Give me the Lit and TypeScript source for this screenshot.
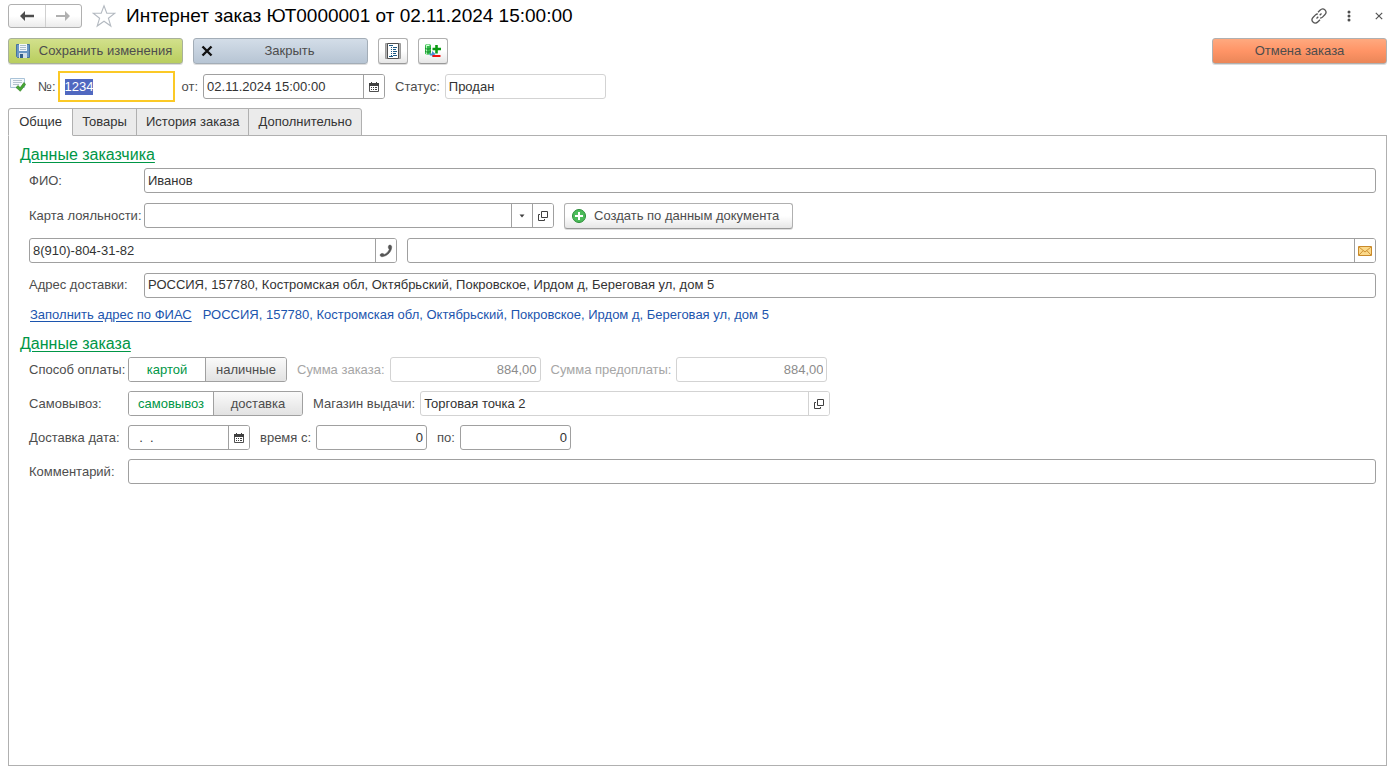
import { LitElement, html, css, svg, nothing, TemplateResult } from "lit";
import { customElement, state, query } from "lit/decorators.js";

const icon = (w: number, h: number, body: TemplateResult) =>
  html`<svg class="icon" width=${w} height=${h} viewBox="0 0 ${w} ${h}" aria-hidden="true">${body}</svg>`;

const icons = {
  back: icon(16, 12, svg`<path d="M1 6 6 1V4.700H15V7.300H6V11Z" fill="#4d4d4d"/>`),
  forward: icon(16, 12, svg`<path d="M15 6 10 1V5H1V7H10V11Z" fill="#b0b0b0"/>`),
  star: icon(24, 24, svg`<path d="M12 1.800 14.800 9.300H22.800L16.400 14.200 18.800 22 12 17.200 5.200 22 7.600 14.200 1.200 9.300H9.200Z" fill="#fff" stroke="#b4bac1" stroke-width="1.100"/>`),
  link: icon(16, 16, svg`<g fill="none" stroke="#555" stroke-width="1.300"><path d="M7 4.200 9 2.200C10.600 .6 12.600 .6 14 1.900 15.300 3.300 15.300 5.300 13.800 6.800L11.500 9.100C10.800 9.800 10 10.100 9.200 10"/><path d="M9 11.800 7 13.800C5.400 15.400 3.400 15.400 2 14.100 .7 12.700 .7 10.700 2.200 9.200L4.500 6.900C5.200 6.200 6 5.900 6.800 6"/><path d="M5.500 10.500 7.300 8.700M8.700 7.300 10.500 5.500"/></g>`),
  more: icon(4, 12, svg`<g fill="#4d4d4d"><circle cx="2" cy="2" r="1.500"/><circle cx="2" cy="6" r="1.500"/><circle cx="2" cy="10" r="1.500"/></g>`),
  close: icon(8, 8, svg`<path d="M.8 .8 7.200 7.200M7.200 .8 .8 7.200" stroke="#555" stroke-width="1.200"/>`),
  save: icon(14, 14, svg`<path d="M.5 .5H13.500V13.500H1.500L.5 12.500Z" fill="#6a97c4" stroke="#47749f"/><path d="M3 0H11V7H3Z" fill="#f3f7fa"/><path d="M4 1.500H10M4 3.500H10M4 5.500H10" stroke="#a9bccb"/><path d="M3 9H11V14H3Z" fill="#d3dfe8"/><path d="M4 10H7V14H4Z" fill="#33608c"/>`),
  cross: icon(12, 12, svg`<path d="M1.500 1.500 10.500 10.500M10.500 1.500 1.500 10.500" stroke="#111" stroke-width="2.400"/>`),
  list: icon(16, 16, svg`<path d="M.5 .5H15.500V15.500H.5Z" fill="#b4b4b4" stroke="#9a9a9a"/><path d="M2.500 .5H13.500V15.500H2.500Z" fill="#fff" stroke="#505050"/><g stroke="#1e5b86"><path d="M4 2.500H8M4 13.500H8"/><path d="M6 4.500H7M8 4.500H12M6 6.500H7M8 6.500H11M6 8.500H7M8 8.500H12M6 10.500H7M8 10.500H11M6 12.500H7M8 12.500H12"/></g>`),
  stock: icon(16, 16, svg`<path d="M0 2.500C0 .5 6 .5 6 2.500V10.500C6 12 0 12 0 10.500Z" fill="#35bd4c"/><path d="M1.500 2V11" stroke="#b6f5bd"/><path d="M3 1.500V3" stroke="#dcffe0" stroke-width="3"/><path d="M0 5C2 6.500 4 6.500 6 5M0 8C2 9.500 4 9.500 6 8" fill="none" stroke="#14872a"/><path d="M4 10.500H7V8L10.500 11 7 14V12.500H5Z" fill="#4a90d0"/><path d="M11.500 2V10.500M7.500 6H16" stroke="#0a9a12" stroke-width="2.600"/><path d="M7.500 13H15.500" stroke="#f01010" stroke-width="2"/>`),
  posted: icon(16, 14, svg`<path d="M.5 .5H14.500V9.500H.5Z" fill="#f5f9fc" stroke="#a9c3d8"/><path d="M3 2.500H12M3 4.500H12M3 6.500H9" stroke="#b5c3cf"/><path d="M6 9.500 8.200 7.500 10 9.800 14 4.500 15.600 6.500 10.300 13.300Z" fill="#46a832" stroke="#2a7a1d" stroke-width=".6"/>`),
  calendar: icon(10, 10, svg`<path d="M.5 2.500H9.500V9.500H.5Z" fill="#fff" stroke="#505050"/><path d="M0 1H10V4H0Z" fill="#404040"/><path d="M2.500 0V2M7.500 0V2" stroke="#404040"/><path d="M2 5.500H3M4 5.500H5M6 5.500H8M2 7.500H3M4 7.500H5M6 7.500H8" stroke="#404040"/>`),
  down: icon(6, 4, svg`<path d="M.5 .5H5.500L3 3.500Z" fill="#404040"/>`),
  open: icon(10, 10, svg`<path d="M3.500 .5H9.500V6.500H3.500Z" fill="none" stroke="#404040"/><path d="M2 3.500H.5V9.500H6.500V8" fill="none" stroke="#404040"/>`),
  phone: icon(14, 14, svg`<path d="M10 1.300C11.500 .6 12.800 1.600 12.700 3.200 12.400 8 8.400 12 3.200 12.700 1.600 12.800 .8 11.600 1.300 10.300 1.900 9.400 3.800 9.100 4.600 9.900L5.200 10.400C7.500 9.600 9.500 7.600 10.300 5.200L9.800 4.700C9 3.900 9.200 1.900 10 1.300Z" fill="#555" stroke="#555" stroke-width=".5"/>`),
  mail: icon(14, 10, svg`<path d="M.5 .5H13.500V9.500H.5Z" fill="#fbd98a" stroke="#c98a2b"/><path d="M1 1 7 6 13 1M1 9 5.200 4.600M13 9 8.800 4.600" fill="none" stroke="#c98a2b" stroke-width=".9"/>`),
  plus: icon(14, 14, svg`<circle cx="7" cy="7" r="6.500" fill="#4cbc5a" stroke="#2b8d38"/><path d="M7 3V11M3 7H11" stroke="#fff" stroke-width="2"/>`),
};

interface FieldOptions {
  id: string;
  value?: string;
  label?: string;
  size?: string;
  numeric?: boolean;
  readonly?: boolean;
  disabled?: boolean;
  actions?: { title: string; icon: TemplateResult }[];
}

@customElement("app-root")
export class AppRoot extends LitElement {
  @state() private tab = "Общие";
  @state() private payment = "картой";
  @state() private delivery = "самовывоз";
  @query("#number") private numberInput!: HTMLInputElement;

  static styles = css`
    :host { display: block; font: 13px/16px "Liberation Sans", Arial, sans-serif; color: #4d4d4d; background: #fff; }
    * { box-sizing: border-box; }
    button, input { font: inherit; color: inherit; margin: 0; }
    button { padding: 0; cursor: pointer; }
    .icon { display: block; flex: none; }
    .page { display: flex; flex-direction: column; min-height: 100vh; padding: 4px 12px 6px 8px; }
    .row { display: flex; align-items: center; }
    .spacer { flex: 1; }

    .titlebar { display: flex; align-items: center; height: 24px; }
    .nav { display: flex; width: 74px; height: 24px; border: 1px solid #b0b0b0; border-radius: 3px; background: linear-gradient(#fff 50%, #ebebeb); }
    .nav button { flex: 1; display: grid; place-items: center; border: 0; background: none; }
    .nav button + button { border-left: 1px solid #d0d0d0; }
    .plain { display: grid; place-items: center; border: 0; background: none; }
    .favorite { margin: 0 10px; }
    h1 { margin: 0; font-size: 19px; line-height: 24px; font-weight: 400; color: #000; white-space: nowrap; }
    .tools { display: flex; gap: 10px; margin-right: -2px; }
    .tools .plain { width: 20px; height: 20px; }

    .toolbar { display: flex; gap: 10px; margin-top: 10px; }
    .button { display: flex; align-items: center; height: 26px; border: 1px solid #b0b0b0; border-bottom-color: #999; border-radius: 3px; padding: 0 7px; background: linear-gradient(#fff 50%, #e6e6e6); box-shadow: 0 1px 0 #ddd; white-space: nowrap; }
    .button .caption { flex: 1; text-align: center; }
    .button .icon + .caption { padding-left: 6px; }
    .wide { width: 175px; }
    .square { width: 30px; justify-content: center; padding: 0; }
    .save { background: linear-gradient(#d2e08c, #b9ce5e); border-color: #a8b19a; }
    .shut { background: linear-gradient(#d3dde8, #b7c5d4); border-color: #a3adb7; }
    .cancel { background: linear-gradient(#ffa97f, #ff9466 50%, #ea8658); border-color: #b0b0b0; }

    .document { display: flex; align-items: center; height: 31px; margin-top: 7px; padding-left: 2px; }
    .document label { padding: 0 5px 0 10px; }
    .document .icon-slot { padding: 0 2px 4px 0; }
    .document .first { padding-right: 2px; }
    .document .near { padding-left: 7px; }

    .field { display: flex; height: 25px; min-width: 0; border: 1px solid #a0a0a0; border-radius: 3px; background: #fff; overflow: hidden; color: #333; }
    .field input { flex: 1; min-width: 0; width: 100%; border: 0; outline: 0; padding: 0 3px; background: none; }
    .field button { flex: none; width: 21px; display: grid; place-items: center; border: 0; border-left: 1px solid #a0a0a0; background: #fff; }
    .field.light, .field.light button { border-color: #d3d3d3; }
    .field.disabled { color: #8c8c8c; }
    .field.numeric input { text-align: right; }
    .field.active { height: 31px; border: 2px solid #fbc926; border-radius: 0; }
    .field.active input { padding: 0 5px; }
    input::selection { background: #5068c0; color: #fff; }
    .grow { flex: 1; }
    .w-number { width: 117px; }
    .w-date { width: 182px; }
    .w-status { width: 161px; }
    .w-lookup { width: 410px; }
    .w-phone { width: 368px; }
    .w-sum { width: 151px; }
    .w-day { width: 122px; }
    .w-time { width: 111px; }

    .tabs { display: flex; margin-top: 6px; }
    .tab { height: 28px; min-width: 65px; padding: 0 9px; margin-bottom: -1px; border: 1px solid #b0b0b0; background: #ebebeb; color: #333; }
    .tab + .tab { margin-left: -1px; }
    .tab:first-child { border-radius: 3px 0 0 0; }
    .tab:last-child { border-radius: 0 3px 0 0; }
    .tab.current { background: #fff; border-bottom-color: #fff; z-index: 1; }
    .panel { flex: 1; border: 1px solid #b0b0b0; padding: 9px 10px 10px 11px; }
    h2 { margin: 0; font-size: 16px; line-height: 20px; font-weight: 400; color: #009646; text-decoration: underline; text-underline-offset: 2px; }

    .form { display: flex; flex-direction: column; gap: 9px; padding: 3px 0 0 9px; }
    .customer { gap: 10px; }
    .form .row { height: 25px; white-space: nowrap; }
    .lead { flex: none; width: 99px; }
    .customer .lead { width: 115px; }
    .next { padding: 0 5px 0 10px; }
    .muted { color: #a6a6a6; }
    .create { margin-left: 10px; }
    .button.create .caption { padding: 0 6px 0 8px; }
    .contacts { gap: 10px; }
    .form .address { height: 24px; }
    .form .hint { height: 16px; gap: 11px; padding-left: 1px; color: #1c55ae; }
    .hint a { color: inherit; text-underline-offset: 2px; }
    .order-title { margin-top: 11px; }

    .switch { display: grid; height: 25px; border: 1px solid #a0a0a0; border-radius: 3px; overflow: hidden; }
    .switch label { display: grid; place-items: center; background: linear-gradient(#fafafa, #e2e2e2); cursor: pointer; }
    .switch label + label { border-left: 1px solid #a0a0a0; }
    .switch label.on { background: #fff; color: #009646; }
    .switch input { appearance: none; width: 0; height: 0; grid-area: 1 / 1; }
    .switch span { grid-area: 1 / 1; }
    .pay { width: 159px; grid-template-columns: 76px 1fr; }
    .ship { width: 175px; grid-template-columns: 84px 1fr; }
  `;

  firstUpdated() {
    this.numberInput.focus();
    this.numberInput.select();
  }

  private field(o: FieldOptions) {
    const names = ["field", o.size ?? "grow"];
    if (o.readonly || o.disabled) names.push("light");
    if (o.disabled) names.push("disabled");
    if (o.numeric) names.push("numeric");
    return html`<div class=${names.join(" ")}>
      <input id=${o.id} type="text" autocomplete="off" .value=${o.value ?? ""} aria-label=${o.label ?? nothing}
        ?readonly=${o.readonly} ?disabled=${o.disabled} />
      ${(o.actions ?? []).map((a) => html`<button type="button" title=${a.title}>${a.icon}</button>`)}
    </div>`;
  }

  private toggle(name: string, cls: string, options: string[], value: string, pick: (v: string) => void) {
    return html`<div class="switch ${cls}" role="radiogroup" aria-labelledby="${name}-label">
      ${options.map((v) => html`<label class=${v === value ? "on" : ""}>
        <input type="radio" name=${name} value=${v} .checked=${v === value} @change=${() => pick(v)} /><span>${v}</span>
      </label>`)}
    </div>`;
  }

  private renderGeneral() {
    const address = "РОССИЯ, 157780, Костромская обл, Октябрьский, Покровское, Ирдом д, Береговая ул, дом 5";
    const calendar = { title: "Выбрать дату", icon: icons.calendar };
    const open = { title: "Открыть", icon: icons.open };
    return html`
      <h2>Данные заказчика</h2>
      <div class="form customer">
        <div class="row"><label class="lead" for="name">ФИО:</label>${this.field({ id: "name", value: "Иванов" })}</div>
        <div class="row">
          <label class="lead" for="card">Карта лояльности:</label>
          ${this.field({ id: "card", size: "w-lookup", actions: [{ title: "Выбрать", icon: icons.down }, open] })}
          <button class="button create" type="button">${icons.plus}<span class="caption">Создать по данным документа</span></button>
        </div>
        <div class="row contacts">
          ${this.field({ id: "phone", size: "w-phone", label: "Телефон", value: "8(910)-804-31-82", actions: [{ title: "Позвонить", icon: icons.phone }] })}
          ${this.field({ id: "email", label: "Электронная почта", actions: [{ title: "Написать", icon: icons.mail }] })}
        </div>
        <div class="row address"><label class="lead" for="address">Адрес доставки:</label>${this.field({ id: "address", value: address })}</div>
        <div class="row hint"><a href="#fias">Заполнить адрес по ФИАС</a><span>${address}</span></div>
      </div>
      <h2 class="order-title">Данные заказа</h2>
      <div class="form">
        <div class="row">
          <span class="lead" id="payment-label">Способ оплаты:</span>
          ${this.toggle("payment", "pay", ["картой", "наличные"], this.payment, (v) => (this.payment = v))}
          <label class="next muted" for="total">Сумма заказа:</label>
          ${this.field({ id: "total", size: "w-sum", value: "884,00", numeric: true, disabled: true })}
          <label class="next muted" for="prepaid">Сумма предоплаты:</label>
          ${this.field({ id: "prepaid", size: "w-sum", value: "884,00", numeric: true, disabled: true })}
        </div>
        <div class="row">
          <span class="lead" id="delivery-label">Самовывоз:</span>
          ${this.toggle("delivery", "ship", ["самовывоз", "доставка"], this.delivery, (v) => (this.delivery = v))}
          <label class="next" for="store">Магазин выдачи:</label>
          ${this.field({ id: "store", size: "w-lookup", value: "Торговая точка 2", readonly: true, actions: [open] })}
        </div>
        <div class="row">
          <label class="lead" for="day">Доставка дата:</label>
          ${this.field({ id: "day", size: "w-day", value: "  .  .", actions: [calendar] })}
          <label class="next" for="from">время с:</label>
          ${this.field({ id: "from", size: "w-time", value: "0", numeric: true })}
          <label class="next" for="to">по:</label>
          ${this.field({ id: "to", size: "w-time", value: "0", numeric: true })}
        </div>
        <div class="row"><label class="lead" for="comment">Комментарий:</label>${this.field({ id: "comment" })}</div>
      </div>`;
  }

  render() {
    return html`<main class="page">
      <header class="titlebar">
        <div class="nav">
          <button type="button" title="Назад">${icons.back}</button>
          <button type="button" title="Вперед">${icons.forward}</button>
        </div>
        <button class="plain favorite" type="button" title="Избранное">${icons.star}</button>
        <h1>Интернет заказ ЮТ0000001 от 02.11.2024 15:00:00</h1>
        <span class="spacer"></span>
        <div class="tools">
          <button class="plain" type="button" title="Получить ссылку">${icons.link}</button>
          <button class="plain" type="button" title="Еще">${icons.more}</button>
          <button class="plain" type="button" title="Закрыть">${icons.close}</button>
        </div>
      </header>
      <div class="toolbar">
        <button class="button wide save" type="button">${icons.save}<span class="caption">Сохранить изменения</span></button>
        <button class="button wide shut" type="button">${icons.cross}<span class="caption">Закрыть</span></button>
        <button class="button square" type="button" title="Отчет">${icons.list}</button>
        <button class="button square" type="button" title="Остатки">${icons.stock}</button>
        <span class="spacer"></span>
        <button class="button wide cancel" type="button"><span class="caption">Отмена заказа</span></button>
      </div>
      <div class="document">
        <span class="icon-slot">${icons.posted}</span>
        <label class="first" for="number">№:</label>
        ${this.field({ id: "number", size: "w-number active", value: "1234" })}
        <label class="near" for="date">от:</label>
        ${this.field({ id: "date", size: "w-date", value: "02.11.2024 15:00:00", actions: [{ title: "Выбрать дату", icon: icons.calendar }] })}
        <label for="status">Статус:</label>
        ${this.field({ id: "status", size: "w-status", value: "Продан", readonly: true })}
      </div>
      <div class="tabs" role="tablist">
        ${["Общие", "Товары", "История заказа", "Дополнительно"].map((t) => html`<button type="button" role="tab"
          class=${t === this.tab ? "tab current" : "tab"} aria-selected=${t === this.tab} @click=${() => (this.tab = t)}>${t}</button>`)}
      </div>
      <section class="panel" role="tabpanel">${this.tab === "Общие" ? this.renderGeneral() : nothing}</section>
    </main>`;
  }
}
